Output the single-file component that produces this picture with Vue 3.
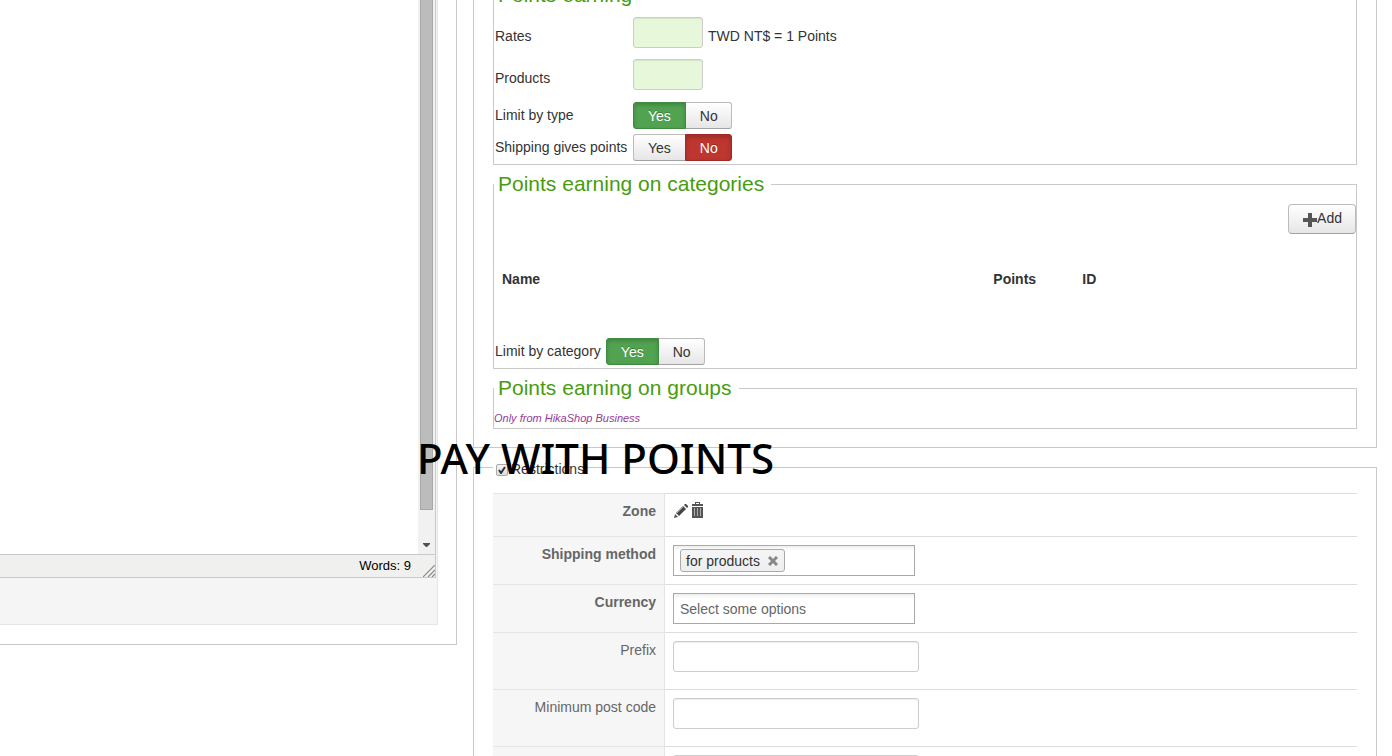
<script setup>
import { reactive, ref } from 'vue'

const form = reactive({
  rates: '',
  products: '',
  limitType: 'Yes',
  shipping: 'No',
  limitCategory: 'Yes',
  restrictions: true,
})
const options = ['Yes', 'No']
const toggles = [
  { key: 'limitType', label: 'Limit by type' },
  { key: 'shipping', label: 'Shipping gives points' },
]
const content = ref('')
const postFields = [
  { id: 'prefix', label: 'Prefix' },
  { id: 'min-post', label: 'Minimum post code' },
]
</script>

<template>
  <div class="page">
    <section class="left-panel">
      <div class="editor-wrap">
        <div class="editor">
          <div class="editor-body">
            <textarea v-model="content" aria-label="Description"></textarea>
            <div class="scrollbar">
              <div class="thumb"></div>
              <svg class="arrow" width="7" height="4" viewBox="0 0 7 4"><path d="M0 0h7v1L4 4H3L0 1z" fill="#505050" /></svg>
            </div>
          </div>
          <div class="status">
            <span>Words: 9</span>
            <svg width="12" height="12" viewBox="0 0 12 12" stroke="#888" stroke-width="1.2"><path d="M0 12L12 0M5 12L12 5M9 12L12 9" /></svg>
          </div>
        </div>
      </div>
    </section>

    <main class="right">
      <section class="panel earning">
        <fieldset class="group">
          <legend>Points earning</legend>
          <div class="rows">
            <label class="name" for="rates">Rates</label>
            <div class="field">
              <input id="rates" v-model="form.rates" class="green" type="text" />
              <span>TWD NT$ = 1 Points</span>
            </div>
            <label class="name" for="products">Products</label>
            <div class="field">
              <input id="products" v-model="form.products" class="green" type="text" />
            </div>
            <template v-for="t in toggles" :key="t.key">
              <span class="name" :id="t.key">{{ t.label }}</span>
              <div class="toggle" role="radiogroup" :aria-labelledby="t.key">
                <label v-for="o in options" :key="o" :class="[o, { on: form[t.key] === o }]">
                  <input v-model="form[t.key]" type="radio" :name="t.key" :value="o" />{{ o }}
                </label>
              </div>
            </template>
          </div>
        </fieldset>

        <fieldset class="group">
          <legend>Points earning on categories</legend>
          <div class="actions">
            <button class="add" type="button">
              <svg width="14" height="14" viewBox="0 0 14 14"><path d="M5 0h4v5h5v4H9v5H5V9H0V5h5z" fill="#555" /></svg>Add
            </button>
          </div>
          <table class="categories">
            <thead>
              <tr><th class="c-name">Name</th><th class="c-points">Points</th><th>ID</th></tr>
            </thead>
          </table>
          <div class="limit">
            <span id="limit-category" class="name">Limit by category</span>
            <div class="toggle" role="radiogroup" aria-labelledby="limit-category">
              <label v-for="o in options" :key="o" :class="[o, { on: form.limitCategory === o }]">
                <input v-model="form.limitCategory" type="radio" name="limitCategory" :value="o" />{{ o }}
              </label>
            </div>
          </div>
        </fieldset>

        <fieldset class="group">
          <legend>Points earning on groups</legend>
          <p class="note">Only from HikaShop Business</p>
        </fieldset>
      </section>

      <fieldset class="panel restrictions">
        <legend>
          <label class="check">
            <input v-model="form.restrictions" type="checkbox" />
            <svg v-if="form.restrictions" class="tick" width="8" height="8" viewBox="0 0 8 8"><path d="M1 4l2 3L7 1" fill="none" stroke="#333" stroke-width="2" /></svg>
            Restrictions
          </label>
        </legend>
        <table class="settings">
          <tbody>
            <tr>
              <th scope="row">Zone</th>
              <td>
                <div class="icons">
                  <button type="button" aria-label="Edit zone">
                    <svg width="15" height="16" viewBox="0 0 15 16">
                      <path d="M1 16l1-4 3 3z" fill="#555" /><path d="M3 11l7-7 3 3-7 7z" fill="#444" /><path d="M4 11l6-6" stroke="#aaa" /><path d="M11 3l1-1h1l2 2v1l-1 1z" fill="#444" />
                    </svg>
                  </button>
                  <button type="button" aria-label="Delete zone">
                    <svg width="11" height="16" viewBox="0 0 11 16">
                      <path d="M3 2V0h5v2h3v2H0V2zM4 1v1h3V1z" fill="#555" fill-rule="evenodd" />
                      <path d="M0 5h11v11H0z" fill="#555" /><path d="M2.500 6v8M5.500 6v8M8.500 6v8" stroke="#aaa" />
                    </svg>
                  </button>
                </div>
              </td>
            </tr>
            <tr>
              <th scope="row"><label for="shipping-method">Shipping method</label></th>
              <td>
                <div class="chosen">
                  <span class="tag">for products
                    <button type="button" aria-label="Remove for products">
                      <svg width="10" height="10" viewBox="0 0 10 10"><path d="M1 1l8 8M9 1L1 9" stroke="#888" stroke-width="3" /></svg>
                    </button>
                  </span>
                  <input id="shipping-method" type="text" />
                </div>
              </td>
            </tr>
            <tr>
              <th scope="row"><label for="currency">Currency</label></th>
              <td>
                <div class="chosen"><input id="currency" type="text" placeholder="Select some options" /></div>
              </td>
            </tr>
            <tr v-for="f in postFields" :key="f.id" class="plain">
              <th scope="row"><label :for="f.id">{{ f.label }}</label></th>
              <td><input :id="f.id" class="text" type="text" /></td>
            </tr>
            <tr class="plain">
              <th></th>
              <td><input class="text" type="text" aria-label="Post code" /></td>
            </tr>
          </tbody>
        </table>
      </fieldset>
    </main>

    <div class="caption">PAY WITH POINTS</div>
  </div>
</template>

<style>
html, body { height: 100%; margin: 0; overflow: hidden; background: #fff; }
#app { height: 100%; }
</style>

<style scoped>
.page {
  position: relative;
  display: grid;
  grid-template-columns: 457fr 904fr;
  gap: 16px;
  align-items: start;
  height: 100%;
  padding-right: 15px;
  box-sizing: border-box;
  overflow: hidden;
  font: 14px/18px "Liberation Sans", Arial, sans-serif;
  color: #333;
}
*, *::before { box-sizing: border-box; }
input, button, textarea { font: inherit; color: inherit; margin: 0; padding: 0; outline: 0; }

.left-panel { border: solid #c9c9c9; border-width: 0 1px 1px 0; padding: 0 18px 19px 0; }
.editor-wrap { background: #f5f5f5; border: solid #e5e5e5; border-width: 0 1px 1px 0; padding: 0 1px 46px 0; }
.editor { border: solid #c9c9c9; border-width: 0 1px 1px 0; }
.editor-body { display: flex; height: 554px; }
textarea { flex: 1; min-width: 0; border: 0; resize: none; background: #fff; }
.scrollbar { width: 17px; background: #f1f1f1; display: flex; flex-direction: column; align-items: center; }
.thumb { width: 13px; height: 510px; background: #bcbcbc; border: 1px solid #a8a8a8; border-top: 0; }
.arrow { margin-top: auto; margin-bottom: 7px; }
.status {
  display: flex; align-items: flex-end; justify-content: flex-end; gap: 12px;
  height: 23px; border-top: 1px solid #c9c9c9; background: #f0f0ee; color: #000;
  font-size: 13px; line-height: 22px;
}

.right { margin-top: -43px; min-width: 0; }
.panel { margin: 0; border: 1px solid #c9c9c9; min-width: 0; }
.earning { padding: 18px 19px; }
.group { margin: 0; padding: 0; border: 1px solid #c9c9c9; min-width: 0; }
.group legend { padding: 0 7px 2px 4px; font-size: 21px; line-height: 37px; color: #489c10; }
.rows { display: grid; grid-template-columns: 138px 1fr; grid-template-rows: 40px 40px 30px 30px; row-gap: 2px; padding: 2px 1px 1px; }
.name { align-self: center; padding-bottom: 2px; white-space: nowrap; }
.field { display: flex; align-items: center; gap: 5px; height: 40px; }
.field span { padding-bottom: 2px; }
.green {
  width: 70px; height: 31px; align-self: flex-start; border: 1px solid #ccc; border-radius: 3px;
  background: #e6f7da; box-shadow: inset 0 1px 1px rgba(0, 0, 0, 0.08); padding: 0 6px;
}
.toggle { display: inline-flex; align-self: center; margin-bottom: 1px; }
.toggle label {
  position: relative; height: 27px; padding: 0 14px; border: 1px solid #bbb; border-bottom-color: #a2a2a2;
  line-height: 26px; background: linear-gradient(#fff, #e6e6e6); cursor: pointer;
}
.toggle label:first-child { border-radius: 3px 0 0 3px; }
.toggle label:last-child { border-radius: 0 3px 3px 0; margin-left: -1px; padding-right: 13px; }
.toggle input { position: absolute; inset: 0; opacity: 0; }
.toggle .on { color: #fff; z-index: 1; box-shadow: inset 0 2px 4px rgba(0, 0, 0, 0.2); text-shadow: 0 -1px 0 rgba(0, 0, 0, 0.25); }
.toggle .Yes.on { background: #51a351; border-color: #3f8a3f; }
.toggle .No.on { background: #bd362f; border-color: #a32a24; }

.actions { display: flex; justify-content: flex-end; }
.add {
  display: flex; align-items: center; height: 30px; padding: 0 13px 2px 14px; border: 1px solid #bbb;
  border-bottom-color: #a2a2a2; border-radius: 4px; background: linear-gradient(#fff, #e6e6e6);
}
.add svg { margin-top: 3px; }
.categories { width: 100%; margin: 28px 0 42px; border-collapse: collapse; }
.categories th { padding: 8px; text-align: left; }
.categories .c-name { width: 57%; }
.categories .c-points { width: 89px; }
.limit { display: flex; align-items: center; gap: 5px; padding: 0 1px 2px; }
.note { margin: 0; padding: 1px 0; font-size: 11px; line-height: 18px; font-style: italic; color: #963a96; }

.restrictions { padding: 0 19px; }
.restrictions legend { padding: 0 0 0 3px; }
.check { position: relative; display: flex; align-items: flex-start; gap: 3px; height: 39px; line-height: 43px; }
.check input { appearance: none; width: 12px; height: 12px; margin-top: 16px; border: 1px solid #aaa; border-radius: 2px; background: linear-gradient(#f4f4f4, #ddd); }
.tick { position: absolute; left: 2px; top: 18px; }
.settings { width: 100%; margin-top: 6px; border-collapse: separate; border-spacing: 0; color: #666; }
.settings th, .settings td { padding: 8px; border-top: 1px solid #ddd; vertical-align: top; }
.settings th { width: 172px; text-align: right; background: #f6f6f6; border-right: 1px solid #e5e5e5; border-top-color: #e5e5e5; }
.plain th { font-weight: normal; }
.icons { display: flex; gap: 4px; height: 26px; }
.icons button { display: flex; height: 16px; border: 0; background: none; }
.chosen {
  display: flex; align-items: center; width: 242px; height: 31px; padding: 0 5px 0 6px; border: 1px solid #aaa;
  background: linear-gradient(#eee, #fff 15%); color: #333;
}
.chosen > input { flex: 1; min-width: 0; border: 0; background: none; }
.chosen > input::placeholder { color: #666; opacity: 1; }
.tag {
  display: flex; align-items: center; gap: 8px; height: 23px; padding: 0 6px 0 5px; border: 1px solid #aaa;
  border-radius: 3px; background: linear-gradient(#f4f4f4 20%, #eee); white-space: nowrap;
}
.tag button { display: flex; border: 0; background: none; }
.text {
  display: block; width: 246px; height: 31px; margin-bottom: 9px; padding: 0 6px; border: 1px solid #ccc;
  border-radius: 3px; box-shadow: inset 0 1px 1px rgba(0, 0, 0, 0.08);
}
.caption {
  position: absolute; left: 417px; top: 428px; font: 500 42px/60px "Noto Sans", sans-serif;
  color: #000; white-space: nowrap; pointer-events: none;
}
</style>
